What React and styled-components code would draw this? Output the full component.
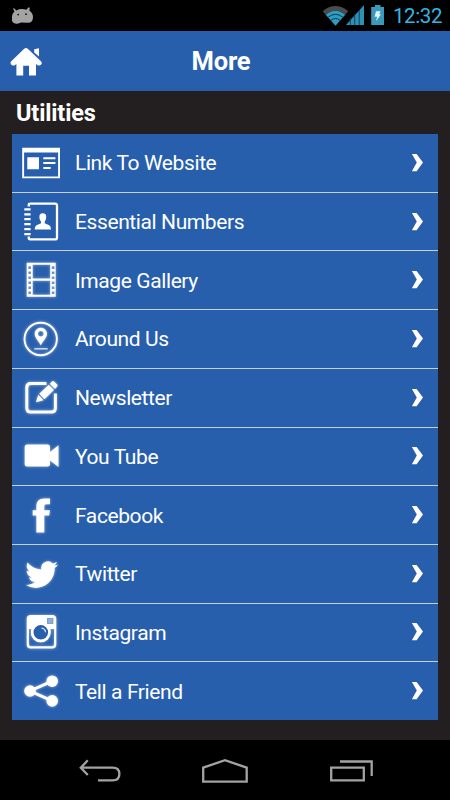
import * as React from "react";
import styled, { createGlobalStyle } from "styled-components";

const GlobalStyle = createGlobalStyle`
  * {
    box-sizing: border-box;
  }
  body {
    margin: 0;
    background: #000;
    font-family: Roboto, "Liberation Sans", sans-serif;
  }
  svg {
    display: block;
  }
`;

const Screen = styled.div`
  display: flex;
  flex-direction: column;
  width: 450px;
  height: 800px;
  background: #231f20;
  overflow: hidden;
`;

const StatusBar = styled.div`
  display: flex;
  align-items: center;
  justify-content: space-between;
  height: 31px;
  padding: 0 8px 0 11px;
  background: #000;
`;

const StatusIcons = styled.div`
  display: flex;
  align-items: center;
`;

const Clock = styled.span`
  width: 49px;
  margin-left: 9px;
  padding-top: 1px;
  color: #33b5e5;
  font-size: 20.5px;
  line-height: 31px;
  letter-spacing: -0.4px;
  white-space: nowrap;
`;

const Header = styled.header`
  display: grid;
  grid-template-columns: 50px 1fr 58px;
  align-items: center;
  height: 60px;
  padding: 0 4px;
  background: #285fad;
`;

const Title = styled.h1`
  margin: 0;
  color: #fff;
  font-size: 25.5px;
  font-weight: 700;
  line-height: 60px;
  letter-spacing: -0.2px;
  text-align: center;
`;

const Content = styled.main`
  flex: 1;
  padding: 0 12px;
`;

const SectionTitle = styled.h2`
  height: 43px;
  margin: 0;
  padding-left: 4px;
  color: #fff;
  font-size: 23.5px;
  font-weight: 700;
  line-height: 45px;
  letter-spacing: -0.15px;
`;

const List = styled.ul`
  display: flex;
  flex-direction: column;
  height: 586px;
  width: 426px;
  margin: 0;
  padding: 0;
  list-style: none;
  background: #285fad;
`;

const Item = styled.li`
  display: flex;
  flex: 1;
  align-items: center;
  padding: 0 14px 0 9px;
  border-bottom: 1px solid #c6cddb;

  &:last-child {
    border-bottom: 0;
  }
`;

const ItemIcon = styled.svg`
  width: 40px;
  height: 40px;
  fill: #fff;
  overflow: visible;
  filter: ${(props) => (props.$glow ? "drop-shadow(0 0.5px 1.5px rgba(255, 255, 255, 0.55))" : "none")};
`;

const ItemLabel = styled.span`
  flex: 1;
  margin-left: 14px;
  padding-top: 1px;
  color: #fff;
  font-size: 21px;
  letter-spacing: -0.4px;
  white-space: nowrap;
`;

const NavBar = styled.nav`
  display: flex;
  align-items: center;
  justify-content: space-between;
  height: 60px;
  padding: 2px 77px 0 79px;
  background: #000;
`;

const items = [
  {
    label: "Link To Website",
    icon: (
      <>
        <path fillRule="evenodd" d="M1.2 4.7H39V35.2H1.2ZM3.1 9.6V33.4H37.1V9.6Z" />
        <path d="M6.3 14.3H18V26.2H6.3ZM22.3 14.2H34.4V16.2H22.3ZM22.3 19.1H34.4V21.1H22.3ZM22.3 23.9H29.7V25.9H22.3Z" />
      </>
    ),
  },
  {
    label: "Essential Numbers",
    icon: (
      <>
        <path
          fill="none"
          stroke="#fff"
          strokeWidth="2.3"
          d="M7.8 4.6V2Q7.8 1.6 9 1.6H34Q36 1.6 36 3.6V35.4Q36 37.4 34 37.4H9Q7.8 37.4 7.8 36.8V34.5"
        />
        <path
          stroke="#fff"
          strokeWidth="2.3"
          d="M3.3 7.4H9.6M3.3 12.3H9.6M3.3 17.2H9.6M3.3 22.2H9.6M3.3 27.2H9.6M3.3 32.2H9.6"
        />
        <path d="M21.8 11.2C24.2 11.2 25.4 12.8 25.2 15.2C25.1 17.2 24.5 18.6 23.7 19.4V21.2L28.2 23.2Q30 24.2 30 27.5H13.7Q13.7 24.2 15.5 23.2L20 21.2V19.4C19.1 18.6 18.5 17.2 18.4 15.2C18.2 12.8 19.4 11.2 21.8 11.2Z" />
      </>
    ),
  },
  {
    label: "Image Gallery",
    glow: true,
    icon: (
      <path
        fillRule="evenodd"
        d="M5.7 2.8H34.7V36.8H5.7ZM11.7 4.8V18.6H29.2V4.8ZM11.7 20.8V34.8H29.2V20.8Z
        M7.4 6.3V8.9H10V6.3ZM7.4 11.4V14H10V11.4ZM7.4 16.4V19H10V16.4ZM7.4 21.4V24H10V21.4ZM7.4 26.4V29H10V26.4ZM7.4 31.4V34H10V31.4Z
        M30.8 6.3V8.9H33.4V6.3ZM30.8 11.4V14H33.4V11.4ZM30.8 16.4V19H33.4V16.4ZM30.8 21.4V24H33.4V21.4ZM30.8 26.4V29H33.4V26.4ZM30.8 31.4V34H33.4V31.4Z"
      />
    ),
  },
  {
    label: "Around Us",
    glow: true,
    icon: (
      <>
        <circle cx="19.7" cy="20" r="16.2" fill="none" stroke="#fff" strokeWidth="1.9" />
        <path
          fillRule="evenodd"
          d="M19.8 8.7C23.3 8.7 26 11.4 26 14.8C26 18.6 22.4 21.5 19.8 26.4C17.2 21.5 13.7 18.6 13.7 14.8C13.7 11.4 16.4 8.7 19.8 8.7ZM19.8 12A2.7 2.7 0 1 0 19.8 17.4A2.7 2.7 0 1 0 19.8 12Z"
        />
        <path d="M13.3 29.3H26.7V30.4H13.3Z" />
      </>
    ),
  },
  {
    label: "Newsletter",
    glow: true,
    icon: (
      <>
        <path
          fill="none"
          stroke="#fff"
          strokeWidth="3"
          d="M25.5 5.4H9.6Q5.8 5.4 5.8 9.4V30Q5.8 34 9.6 34H30.4Q34.4 34 34.4 30V15.5"
        />
        <path d="M15 24.3L17.2 16.8L22.6 22.2ZM18.2 15.8L27.7 6.7L33 12L23.5 21.2ZM28.7 5.7L31.2 3.3Q32.2 2.5 33.2 3.5L36.2 6.5Q37 7.5 36.2 8.4L34 11Z" />
      </>
    ),
  },
  {
    label: "You Tube",
    glow: true,
    icon: (
      <path d="M6.2 8.5H26.5Q29 8.5 29 11V16L37.5 9.3V31L29 24.5V28Q29 30.5 26.5 30.5H6.2Q3.7 30.5 3.7 28V11Q3.7 8.5 6.2 8.5Z" />
    ),
  },
  {
    label: "Facebook",
    glow: true,
    icon: (
      <path d="M15.4 37.4V20.6H11.7V15.2H15.4V11.6C15.4 6.1 18.1 3.4 23.2 3.4H29V9.2H25.6C23.8 9.2 23.3 10 23.3 11.7V15.2H28.9L28.2 20.6H23.3V37.4Z" />
    ),
  },
  {
    label: "Twitter",
    glow: true,
    icon: (
      <path
        transform="translate(4.4 4.3) scale(1.36)"
        d="M23.95 4.57a10 10 0 0 1-2.82.77 4.96 4.96 0 0 0 2.16-2.72c-.95.55-2 .95-3.13 1.18a4.92 4.92 0 0 0-8.38 4.48C7.69 8.1 4.07 6.13 1.64 3.16a4.92 4.92 0 0 0 1.52 6.57 4.9 4.9 0 0 1-2.23-.61v.06c0 2.38 1.7 4.37 3.95 4.83a5 5 0 0 1-2.21.08 4.94 4.94 0 0 0 4.6 3.42A9.87 9.87 0 0 1 0 19.54a14 14 0 0 0 7.55 2.21c9.05 0 14-7.5 14-13.98 0-.21 0-.42-.02-.63a9.94 9.94 0 0 0 2.46-2.55z"
      />
    ),
  },
  {
    label: "Instagram",
    glow: true,
    icon: (
      <>
        <path
          fillRule="evenodd"
          d="M9.7 3H31.3Q35.3 3 35.3 7V32.5Q35.3 36.5 31.3 36.5H9.7Q5.7 36.5 5.7 32.5V7Q5.7 3 9.7 3ZM7.9 17.1V32Q7.9 34.3 10.2 34.3H30.8Q33.1 34.3 33.1 32V17.1H29.5V20.5A9.8 9.8 0 0 1 9.9 20.5L10.4 17.1ZM26 5.9V12.1H32.4V5.9Z"
        />
        <circle cx="19.8" cy="20.3" r="8.6" fill="#285fad" stroke="#fff" strokeWidth="2.6" />
        <path fill="none" stroke="#dfe8f5" strokeWidth="1.2" d="M20.5 16.1Q24.3 16.5 24.5 20.2" />
        <rect x="27" y="6.9" width="4.4" height="4.2" fill="#8faed6" />
      </>
    ),
  },
  {
    label: "Tell a Friend",
    glow: true,
    icon: (
      <>
        <path fill="none" stroke="#fff" strokeWidth="3" d="M31.2 10.2L9 20L31.2 29.9" />
        <circle cx="9" cy="20" r="5.8" />
        <circle cx="31.2" cy="10.2" r="5.8" />
        <circle cx="31.2" cy="29.9" r="5.8" />
      </>
    ),
  },
];

function StatusIndicators() {
  return (
    <svg width="62" height="22" viewBox="322 5 62 22">
      <path fill="#4b4b4b" d="M322.7 11.2Q335.5 1 348.2 11.2L345.2 14.8Q335.5 6.5 325.7 14.8Z" />
      <path fill="#2f9cc4" d="M325.7 14.8Q335.5 6.5 345.2 14.8L335.5 25.7Z" />
      <path fill="none" stroke="#08384a" strokeWidth="1" d="M328.2 17.2Q335.5 11.4 342.8 17.2M331 20.3Q335.5 16.6 340 20.3" />
      <path fill="#2f8fb4" d="M346 25L364 5V25Z" />
      <path stroke="#0b3d50" strokeWidth="0.9" d="M350.3 18V25M354.7 14V25M359.2 10V25" />
      <path fill="#3a9abd" d="M375 5H380.5V7H384V25H371.2V7H375Z" />
      <path fill="#e3f4fa" d="M376 11.2H380.6L379.2 14.3H381L376 21.3L377.1 16.7H374.6Z" />
    </svg>
  );
}

function Chevron() {
  return (
    <svg width="13" height="20" viewBox="0 0 13 20">
      <path fill="#fff" d="M0.9 0.9H5.6L12 9.5L5.6 18.2H0.9L5.8 9.5Z" />
    </svg>
  );
}

function App() {
  return (
    <Screen>
      <GlobalStyle />
      <StatusBar>
        <svg width="23" height="18" viewBox="11 7 23 18">
          <path
            fill="#a3a3a3"
            d="M13 8.6L14.1 8.2L16.4 10.4Q21 7.9 26.3 9.8L28.7 7.2L29.8 7.8L29.4 10.8Q33.2 13.3 33 17.5Q32.7 22.8 28 22.8L21 22.5Q18.5 24.2 15 23.4Q11.2 22.4 12 18.6Q11.5 14 14.5 11.4Z"
          />
          <circle cx="18.2" cy="14.6" r="0.9" fill="#111" />
          <circle cx="26" cy="14.2" r="0.9" fill="#111" />
        </svg>
        <StatusIcons>
          <StatusIndicators />
          <Clock>12:32</Clock>
        </StatusIcons>
      </StatusBar>
      <Header>
        <svg width="44" height="40" viewBox="4 41 44 40">
          <path
            fill="#fff"
            d="M24.2 48.8Q26 47.2 27.8 48.8L41.2 61.4Q42.4 63 41.4 64.3Q40 66 38 65.4L36 64V75.6H29V65.8H23.2V75.6H16.4V64L14.4 65.4Q12.2 66 10.9 64.3Q10 62.8 11 61.4ZM34.2 49.2L39 48.2V56.6L34.2 52.4Z"
          />
        </svg>
        <Title>More</Title>
      </Header>
      <Content>
        <SectionTitle>Utilities</SectionTitle>
        <List>
          {items.map((item) => (
            <Item key={item.label}>
              <ItemIcon viewBox="0 0 40 40" $glow={item.glow}>
                {item.icon}
              </ItemIcon>
              <ItemLabel>{item.label}</ItemLabel>
              <Chevron />
            </Item>
          ))}
        </List>
      </Content>
      <NavBar>
        <svg width="42" height="24" viewBox="79 760 42 24" fill="none" stroke="#a3a3a3" strokeWidth="2.3">
          <path d="M87.8 761.3L80.8 768.7L87.8 776M81 768.7H112.5Q119.4 768.7 119.4 775Q119.4 781.4 112.5 781.4H98" />
        </svg>
        <svg width="48" height="26" viewBox="201 758 48 26" fill="none" stroke="#a3a3a3" strokeWidth="2.3">
          <path d="M203.2 781.6V767.6L225 760.2L246.7 767.6V781.6Z" />
        </svg>
        <svg width="44" height="24" viewBox="329 760 44 24" fill="none" stroke="#a3a3a3" strokeWidth="2.3">
          <path d="M331.2 768.6H363.8V781.4H331.2ZM340 762.5H371.7V777" />
        </svg>
      </NavBar>
    </Screen>
  );
}

export default App;
